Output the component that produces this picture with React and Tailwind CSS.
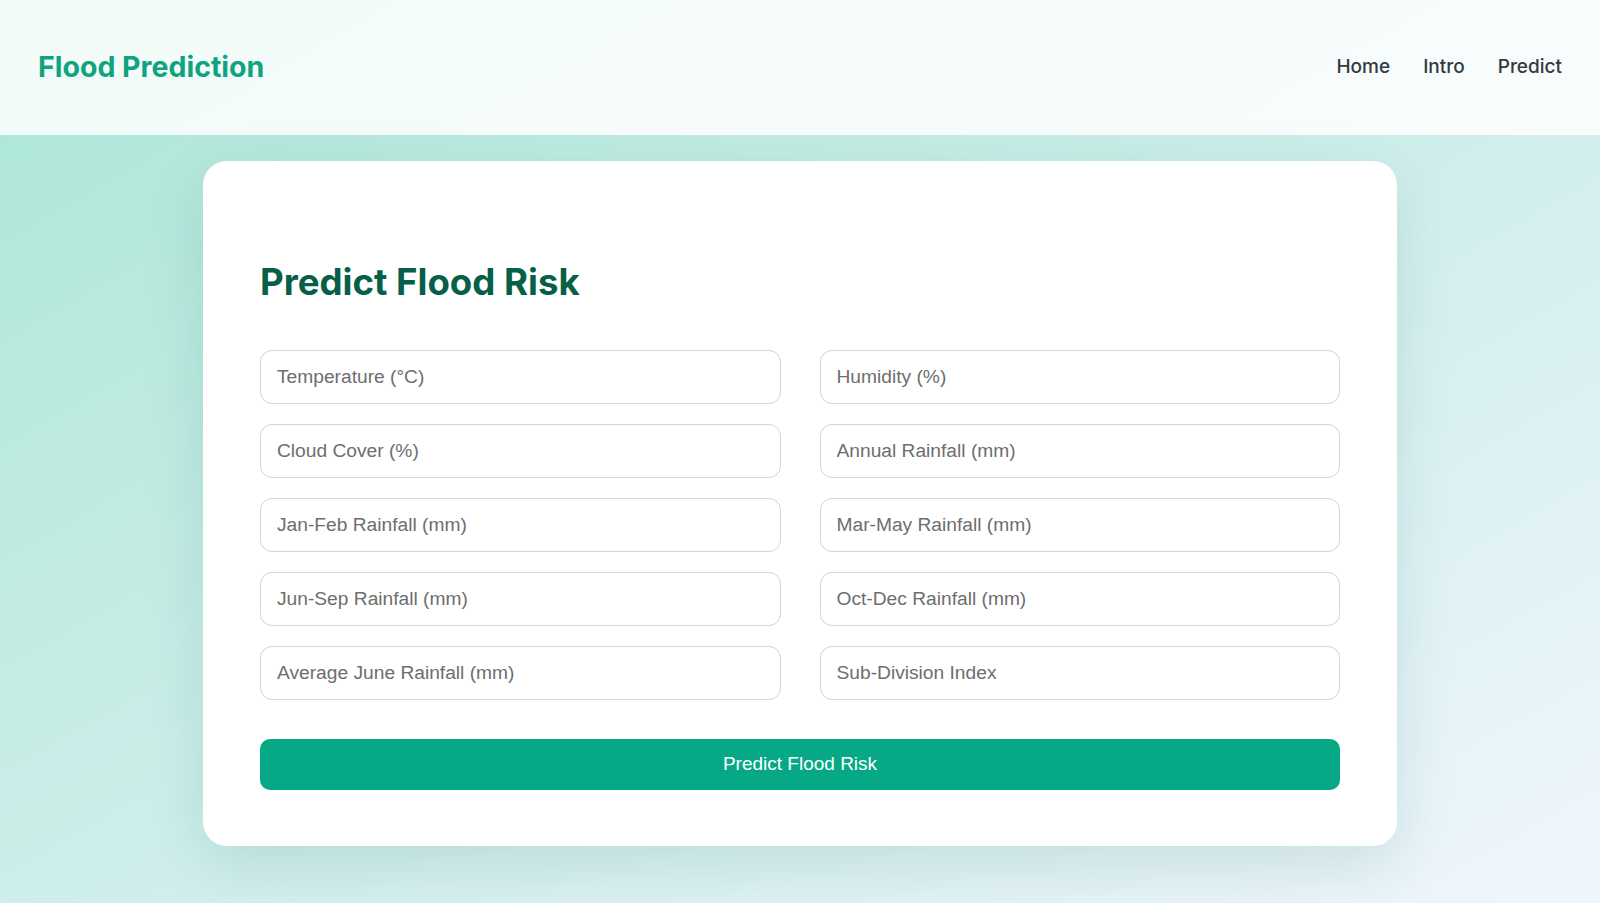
const fields = [
  "Temperature (°C)",
  "Humidity (%)",
  "Cloud Cover (%)",
  "Annual Rainfall (mm)",
  "Jan-Feb Rainfall (mm)",
  "Mar-May Rainfall (mm)",
  "Jun-Sep Rainfall (mm)",
  "Oct-Dec Rainfall (mm)",
  "Average June Rainfall (mm)",
  "Sub-Division Index",
];

function Header() {
  return (
    <header className="h-[135px] flex items-center justify-between px-[38px] bg-white/85">
      <h1 className="text-[28.5px] font-bold text-[#0ea47f] font-['Inter',sans-serif]">
        Flood Prediction
      </h1>
      <nav className="flex items-center gap-[33px] text-[19px] font-medium text-[#333a3f] font-['Inter',sans-serif]">
        <a href="#">Home</a>
        <a href="#">Intro</a>
        <a href="#">Predict</a>
      </nav>
    </header>
  );
}

function PredictForm() {
  return (
    <div className="w-[1194px] rounded-3xl bg-white px-[57px] pt-[101px] pb-14 shadow-[0_20px_60px_rgba(0,90,90,0.13)]">
      <h2 className="text-[36.6px] leading-[40px] font-bold text-[#065f46] font-['Inter',sans-serif] mb-[48px]">
        Predict Flood Risk
      </h2>
      <div className="grid grid-cols-2 gap-x-[39px] gap-y-5">
        {fields.map((f) => (
          <input
            key={f}
            type="text"
            placeholder={f}
            className="h-[54px] w-full rounded-xl border border-[#d4d4d4] bg-white px-4 text-[19.2px] text-[#333] placeholder-[#6e6e6e] font-['Liberation_Sans',Arial,sans-serif] outline-none"
          />
        ))}
      </div>
      <button className="mt-[39px] h-[51px] w-full rounded-[10px] bg-[#06a886] text-white text-[19px] font-['Liberation_Sans',Arial,sans-serif]">
        Predict Flood Risk
      </button>
    </div>
  );
}

export default function App() {
  return (
    <div className="min-h-screen bg-gradient-to-br from-[#a9e6d6] via-[#cdeeea] to-[#f0f6fd]">
      <Header />
      <main className="flex justify-center pt-[26px] pb-14">
        <PredictForm />
      </main>
    </div>
  );
}
